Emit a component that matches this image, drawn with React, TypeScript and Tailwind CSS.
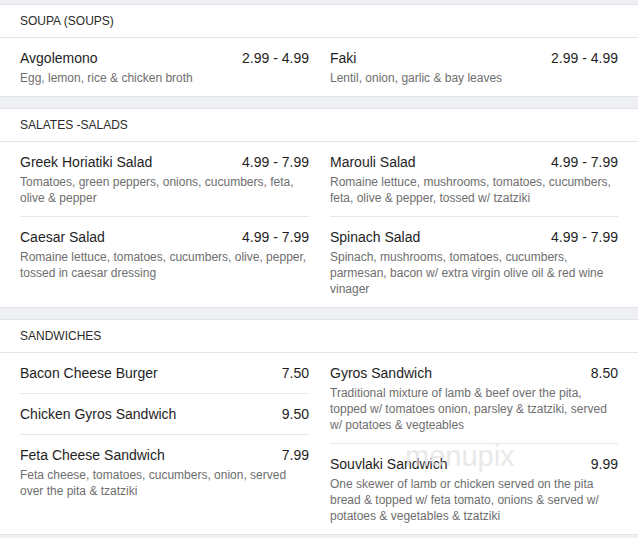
type Item = { name: string; price: string; desc?: string };

const soups: Item[][] = [
  [{ name: 'Avgolemono', price: '2.99 - 4.99', desc: 'Egg, lemon, rice & chicken broth' }],
  [{ name: 'Faki', price: '2.99 - 4.99', desc: 'Lentil, onion, garlic & bay leaves' }],
];

const salads: Item[][] = [
  [
    { name: 'Greek Horiatiki Salad', price: '4.99 - 7.99', desc: 'Tomatoes, green peppers, onions, cucumbers, feta, olive & pepper' },
    { name: 'Caesar Salad', price: '4.99 - 7.99', desc: 'Romaine lettuce, tomatoes, cucumbers, olive, pepper, tossed in caesar dressing' },
  ],
  [
    { name: 'Marouli Salad', price: '4.99 - 7.99', desc: 'Romaine lettuce, mushrooms, tomatoes, cucumbers, feta, olive & pepper, tossed w/ tzatziki' },
    { name: 'Spinach Salad', price: '4.99 - 7.99', desc: 'Spinach, mushrooms, tomatoes, cucumbers, parmesan, bacon w/ extra virgin olive oil & red wine vinager' },
  ],
];

const sandwiches: Item[][] = [
  [
    { name: 'Bacon Cheese Burger', price: '7.50' },
    { name: 'Chicken Gyros Sandwich', price: '9.50' },
    { name: 'Feta Cheese Sandwich', price: '7.99', desc: 'Feta cheese, tomatoes, cucumbers, onion, served over the pita & tzatziki' },
  ],
  [
    { name: 'Gyros Sandwich', price: '8.50', desc: 'Traditional mixture of lamb & beef over the pita, topped w/ tomatoes onion, parsley & tzatziki, served w/ potatoes & vegteables' },
    { name: 'Souvlaki Sandwich', price: '9.99', desc: 'One skewer of lamb or chicken served on the pita bread & topped w/ feta tomato, onions & served w/ potatoes & vegetables & tzatziki' },
  ],
];

export default function App() {
  return (
    <div className="relative min-h-[538px] bg-[#eff0f4] pt-1 font-['Liberation_Sans',Arial,sans-serif]">
      <div className="flex flex-col gap-[11px]">
        <Section title="SOUPA (SOUPS)" columns={soups} />
        <Section title="SALATES -SALADS" columns={salads} />
        <Section title="SANDWICHES" columns={sandwiches} />
      </div>

      {/* watermark */}
      <div className="pointer-events-none absolute left-[405px] top-[442px] text-[29px] leading-none text-[#e0e0e4] opacity-70">
        menupix
      </div>
    </div>
  );
}

function Section({ title, columns }: { title: string; columns: Item[][] }) {
  return (
    <div className="bg-white border-y border-[#e2e3e8]">
      <div className="border-b border-[#e3e4e8] px-5 py-2 text-[12px] leading-4 text-[#2b2b2b]">{title}</div>
      <div className="grid grid-cols-[289px_288px] gap-x-[21px] px-5">
        {columns.map((col, i) => (
          <div key={i} className="flex flex-col divide-y divide-[#e6e7ea]">
            {col.map((item) => (
              <MenuItem key={item.name} item={item} />
            ))}
          </div>
        ))}
      </div>
    </div>
  );
}

function MenuItem({ item }: { item: Item }) {
  return (
    <div className={item.desc ? 'pt-[11px] pb-[10px]' : 'py-[11px]'}>
      <div className="flex justify-between text-[14px] leading-[18px] text-[#1e1e1e]">
        <span>{item.name}</span>
        <span>{item.price}</span>
      </div>
      {item.desc && <p className="mt-[3px] text-[12px] leading-4 text-[#6e6e6e]">{item.desc}</p>}
    </div>
  );
}
